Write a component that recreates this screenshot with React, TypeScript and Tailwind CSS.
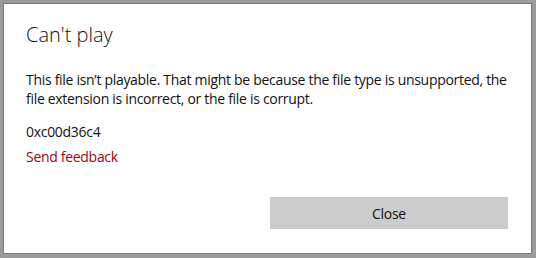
export default function App() {
  return (
    <div
      className="w-[536px] h-[258px] bg-[#9b9b9b] pt-[3px] pl-[3px] pr-[4px] pb-[4px]"
      style={{ fontFamily: '"Open Sans", "Noto Sans", sans-serif' }}
    >
      <div className="h-full border border-[#7c7c7c] bg-white flex flex-col pl-[22px] pr-[10px]">
        <h1 className="mt-[17px] text-[20px] leading-[28px] font-[350] text-[#111]">Can't play</h1>
        <p className="mt-[21px] text-[14px] leading-[19px] tracking-[-0.3px] text-[#111]">
          This file isn’t playable. That might be because the file type is unsupported, the file
          extension is incorrect, or the file is corrupt.
        </p>
        <div className="mt-[14px] text-[14px] leading-[19px] tracking-[-0.3px] text-[#111]">0xc00d36c4</div>
        <a className="mt-[6px] text-[14px] leading-[19px] tracking-[-0.3px] text-[#a4000f]">Send feedback</a>
        <div className="flex justify-end mt-auto mb-[24px] pr-[13px]">
          <button className="w-[238px] h-[32px] bg-[#cccccc] text-[14px] tracking-[-0.3px] text-[#111]">Close</button>
        </div>
      </div>
    </div>
  );
}
